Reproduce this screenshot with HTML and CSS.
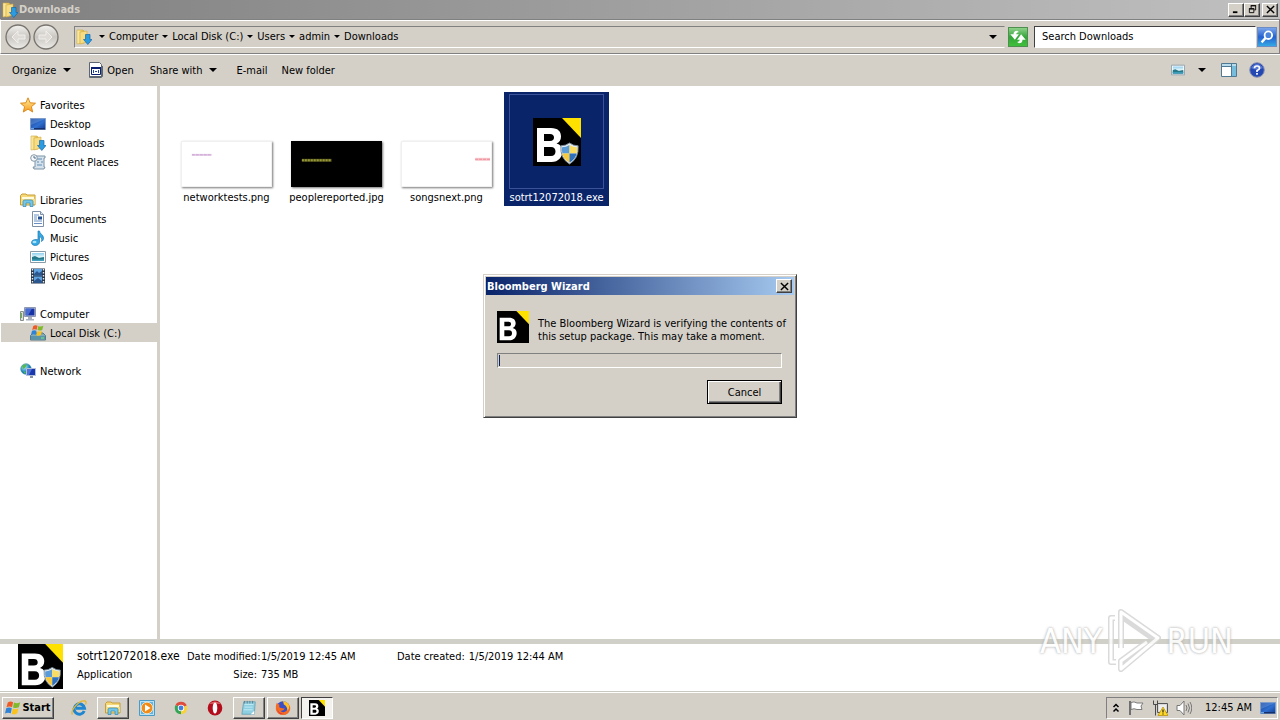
FILE: index.html
```html
<!DOCTYPE html>
<html lang="en">
<head>
<meta charset="utf-8">
<title>Downloads</title>
<link rel="stylesheet" href="styles.css">
</head>
<body>
<svg class="defs" aria-hidden="true">
  <defs>
    <linearGradient id="gFolder" x1="0" x2="1"><stop offset="0" stop-color="#fff3b0"/><stop offset="1" stop-color="#e3b83c"/></linearGradient>
    <linearGradient id="gScreen" x1="0" y1="0" x2="1" y2="1"><stop offset="0" stop-color="#1c3f94"/><stop offset=".55" stop-color="#2f6fd0"/><stop offset="1" stop-color="#123a8c"/></linearGradient>
    <linearGradient id="gStar" x1="0" y1="0" x2="0" y2="1"><stop offset="0" stop-color="#fff0a0"/><stop offset="1" stop-color="#f79a1c"/></linearGradient>
    <linearGradient id="gPic" x1="0" y1="0" x2="0" y2="1"><stop offset="0" stop-color="#8fd0f0"/><stop offset=".5" stop-color="#e6f7fb"/><stop offset="1" stop-color="#1d6f86"/></linearGradient>
    <linearGradient id="gBtn" x1="0" y1="0" x2="0" y2="1"><stop offset="0" stop-color="#f4f3f0"/><stop offset=".5" stop-color="#c9c6c1"/><stop offset="1" stop-color="#efedea"/></linearGradient>
    <radialGradient id="gGlobe" cx=".35" cy=".3"><stop offset="0" stop-color="#b9f0ff"/><stop offset="1" stop-color="#157bb8"/></radialGradient>
  </defs>
  <symbol id="downloads" viewBox="0 0 16 16">
    <path d="M1 1h6l1 1v12l-7 1z" fill="url(#gFolder)" stroke="#cfa640" stroke-width=".6"/>
    <path d="M4 3l7-1v11l-7 2z" fill="#f7dc82" stroke="#d2ab45" stroke-width=".6"/>
    <path d="M9.500 5.500h4.500v5h2l-4.200 5-4.300-5h2z" fill="#2d9be0" stroke="#1668ab" stroke-width=".7"/>
  </symbol>
  <symbol id="star" viewBox="0 0 16 16"><path d="M8 .8l2.100 5 5.400.4-4.100 3.500 1.300 5.300L8 12.100 3.300 15l1.300-5.300L.5 6.200l5.400-.4z" fill="url(#gStar)" stroke="#dd8a1c"/></symbol>
  <symbol id="desktop" viewBox="0 0 16 16">
    <path d="M.5 2.500h15v11H.5z" fill="url(#gScreen)" stroke="#7f9bc8"/><path d="M1 3h14L1 9z" fill="#7fb2ef" opacity=".35"/><path d="M1 12h14v1.500H1z" fill="#16306b"/><path d="M1 12h3v1.500H1z" fill="#6aa4e8"/>
  </symbol>
  <symbol id="recent" viewBox="0 0 16 16">
    <path d="M5 2h10v2h-1v9h1l-1 2H4l-1-2h2z" fill="#d5e2ec" stroke="#7d93a6"/><path d="M7 5h5M7 8h2m2 0h2M7 11h5" stroke="#5e8db3"/><circle cx="4" cy="4" r="3.300" fill="#f6f9fb" stroke="#8799a8"/><path d="M4 2v2h2" fill="none" stroke="#516f89"/>
  </symbol>
  <symbol id="library" viewBox="0 0 16 16">
    <path d="M.5 3.500L2 2h4l1 1h8v10H.5z" fill="#f5d978" stroke="#c89d35"/><path d="M2 5h12v3H2z" fill="#fffbe0"/><path d="M1 7h14v5H1z" fill="#f3dc83"/><path d="M3 14.500V9.500q0-1.500 2-1.500h6q2 0 2 1.500v5h-3V11H6v3.500z" fill="#74c6e9" stroke="#3387ad" stroke-width=".7"/>
  </symbol>
  <symbol id="document" viewBox="0 0 16 16"><path d="M2.500.5h8l3 3v12h-11z" fill="#fff" stroke="#7d8fa4"/><path d="M10.500.5v3h3" fill="#dce8f3" stroke="#7d8fa4"/><path d="M4 4h5M4 6h3M4 8h3M4 10h8M4 12.500h8" stroke="#6b8fc2"/><path d="M8 5.500h4v3H8z" fill="#234f8e"/></symbol>
  <symbol id="music" viewBox="0 0 16 16"><path d="M8 1h1.500c0 3 4 3.500 4 7 0 2-1 3-2 3.500.8-3-.5-4.500-2-5V12c0 2-2 3.500-4.200 3.500S1.500 14.300 1.500 12.500 3.500 9.500 6 9.500l2 .3z" fill="#35a8e0" stroke="#1a78b8" stroke-width=".7"/><ellipse cx="4.500" cy="12" rx="2" ry="1.200" fill="#a8e3fb"/></symbol>
  <symbol id="picture" viewBox="0 0 16 16"><path d="M.5 2.500h15v11H.5z" fill="#fff" stroke="#8a9ba8"/><path d="M2 4h12v8H2z" fill="url(#gPic)"/><path d="M2 8l3-1 4 2 5-1v4H2z" fill="#267988"/><path d="M2 10.500h12V12H2z" fill="#41a2c2"/></symbol>
  <symbol id="video" viewBox="0 0 16 16"><path d="M1 .5h14v15H1z" fill="#27384c"/><path d="M4 1h8v6.500H4zM4 8.500h8V15H4z" fill="#5fa4e0"/><path d="M4 6l3-3 2 2 3-2v4.500H4zM4 13l4-3 4 3v2H4z" fill="#2b568e"/><path d="M2.500 1v14M13.500 1v14" stroke="#e8eef4" stroke-width="1.400" stroke-dasharray="1.500 1.500"/></symbol>
  <symbol id="computer" viewBox="0 0 16 16"><path d="M.5 5.500h3v9h-3z" fill="#d7dedb" stroke="#849088"/><path d="M1.500 7v5" stroke="#67b24b"/><path d="M4.500 1.500h11v9h-11z" fill="#cfd5e2" stroke="#8f98b3"/><path d="M5.500 2.500h9v7h-9z" fill="#1732a4"/><path d="M5.500 2.500H12l-4 7H5.500z" fill="#5e83e4" opacity=".7"/><path d="M8 11h4v2h2v1.500H6V13h2z" fill="#a9b0bd"/></symbol>
  <symbol id="flag" viewBox="0 0 16 16"><path d="M2.800 2.500Q5.300.7 8.100 2.200L7 7.200Q4.300 5.800 1.500 7.300z" fill="#ee5a25"/><path d="M9 2.500q2.800 1.400 6.200-.2l-1.400 5q-2.900 1.500-5.800.2z" fill="#80ba2b"/><path d="M1.200 8.300Q4 6.900 6.800 8.200L5.800 13.300Q3 12 0 13.400z" fill="#2f83d6"/><path d="M7.800 8.600q2.900 1.300 5.700-.1l-1.400 5.100q-2.700 1.500-5.400.1z" fill="#fbc21d"/></symbol>
  <symbol id="disk" viewBox="0 0 16 16"><path d="M.5 10.500L3 8h10l2.500 2.500v4.500H.5z" fill="#7faaba" stroke="#557988"/><path d="M1 11h14v3.500H1z" fill="#5b94a8"/><path d="M11 13h3" stroke="#75ef78"/><svg x="1" y="-1" width="13" height="13" viewBox="0 0 16 16"><use href="#flag"/></svg></symbol>
  <symbol id="network" viewBox="0 0 16 16"><circle cx="6" cy="6" r="5.300" fill="url(#gGlobe)" stroke="#3a8b9a" stroke-width=".6"/><path d="M2 3q3-3 5-1L5 5 3 6zM3 8l3 1-1 2z" fill="#55b854"/><path d="M6.500 5.500h9v7h-9z" fill="#1a38ad" stroke="#b4bfd8"/><path d="M7 6h5l-3 6H7z" fill="#658ce8" opacity=".7"/><path d="M10 13h3v2h-3z" fill="#8694a8"/></symbol>
  <symbol id="app" viewBox="0 0 16 16"><path d="M1.500.500h10l2 2v13h-12z" fill="#fff" stroke="#5d6670"/><path d="M2 14.500h12.500V4" fill="none" stroke="#5d6670"/><path d="M3 5h10v8H3z" fill="#fff"/><path d="M3.500 5.500h9v7h-9z" fill="#fff" stroke="#0b1f6e"/><path d="M3 5h10v2H3z" fill="#0b1f6e"/><path d="M5 8h1v3H5zM7 9h2v1H7zM10 8h1v3h-1z" fill="#23479c"/></symbol>
  <symbol id="shield" viewBox="0 0 24 24"><path d="M12 1q4 3 9 3 1 13-9 19Q2 17 3 4q5 0 9-3z" fill="#e5edf3" stroke="#768796"/><path d="M12 3v9H4.500q-.6-3.500-.3-6.500Q8.500 5.300 12 3z" fill="#5b9bd8"/><path d="M12 3q3.500 2.300 7.800 2.500.3 3-.3 6.500H12z" fill="#fbdc63"/><path d="M4.500 12H12v9.500Q6 18 4.500 12z" fill="#f7c93b"/><path d="M19.500 12H12v9.500Q18 18 19.500 12z" fill="#2f70bd"/></symbol>
  <symbol id="bloom" viewBox="0 0 48 48"><path d="M0 0h48v48H0z" fill="#000"/><path d="M29 0h19v20z" fill="#ffe100"/><path fill-rule="evenodd" d="M4 10h14c7 0 10 3.500 10 8.500 0 3.500-1.700 6-4.500 7 4 1 6 4 6 7.500 0 6-4 11-11 11H4zM11 16v7h6c2.700 0 4-1.300 4-3.500S19.700 16 17 16zM11 29v9h7c3 0 4.500-2 4.500-4.500S21 29 18 29z" fill="#fff"/></symbol>
  <symbol id="bloomSafe" viewBox="0 0 48 48"><use href="#bloom"/><svg x="25" y="24" width="23" height="23" viewBox="0 0 24 24"><use href="#shield"/></svg></symbol>
  <symbol id="ie" viewBox="0 0 16 16"><path d="M13.200 11A5.200 5.200 0 1 1 13.500 8.300H5" fill="none" stroke="#1f86cf" stroke-width="3"/><path d="M1.500 14.500C-1 11 8-.5 14 1c1.500.4 1.200 2 .5 3.500" fill="none" stroke="#e3b62f" stroke-width="1.300"/></symbol>
  <symbol id="player" viewBox="0 0 16 16"><path d="M.5.500h15v15H.5z" fill="#b8e0f5" stroke="#4b9ac6"/><path d="M2 2h12v12H2z" fill="#64b4df"/><circle cx="8" cy="8" r="5.800" fill="#f28a17" stroke="#fff0cf" stroke-width=".8"/><path d="M6 4.500L11.500 8 6 11.500z" fill="#fff"/></symbol>
  <symbol id="chrome" viewBox="0 0 16 16"><path d="M8 8L2.500 5A6.300 6.300 0 0 1 13.800 5.500z" fill="#df4b3c"/><path d="M8 8l5.800-2.500A6.300 6.300 0 0 1 8 14.300z" fill="#f9d13d"/><path d="M8 8v6.300A6.300 6.300 0 0 1 2.500 5z" fill="#35a657"/><circle cx="8" cy="8" r="3.200" fill="#fff"/><circle cx="8" cy="8" r="2.400" fill="#427edb"/></symbol>
  <symbol id="opera" viewBox="0 0 16 16"><ellipse cx="8" cy="8" rx="7.300" ry="7.500" fill="#b30d1c"/><path d="M2 4q6-5 12 0-6-1-12 0z" fill="#e06a6a"/><ellipse cx="8" cy="8" rx="2.300" ry="5.500" fill="#fff"/></symbol>
  <symbol id="notepad" viewBox="0 0 18 18"><path d="M3 2h13l-1 14H1z" fill="#8fcfe2" stroke="#6ba4b6"/><path d="M4 5h10M4 8h9M3 11h10" stroke="#c6edf5"/><path d="M4 1v3M7 1v3M10 1v3M13 1v3" stroke="#637d86"/><path d="M11 16l4-4v4z" fill="#fff"/></symbol>
  <symbol id="firefox" viewBox="0 0 18 18"><circle cx="9" cy="9" r="7.500" fill="#3b4ec5"/><path d="M2 3q1 2 3 2Q4 9 7 9q3 1 4 0-1 4-5 3 4 4 8-1 2-4-1-8 5 3 4 8-2 6-8 6T1 11Q.5 6 2 3z" fill="#f46b21"/><path d="M9 1q6 1 7 6 0 3-2 5 0-5-4-7z" fill="#ffc329"/><path d="M2 9q2 7 8 6-6 3-8-6z" fill="#e52f3a"/></symbol>
</svg>

<div class="screen">
<main class="window">
  <header class="title">
    <svg class="ico"><use href="#downloads"/></svg>
    <h1>Downloads</h1>
    <div class="winbtns">
      <button class="cap" aria-label="Minimize"><svg viewBox="0 0 10 10"><path d="M1 8h5" stroke="#000" stroke-width="2"/></svg></button>
      <button class="cap" aria-label="Restore"><svg viewBox="0 0 10 10"><path d="M3.500 4V.5h5v5H7M3 1h6M1.500 4.500h5v4h-5zM1 4h6" fill="none" stroke="#000"/></svg></button>
      <button class="cap close" aria-label="Close"><svg viewBox="0 0 10 10"><path d="M1 1l8 8M9 1L1 9" stroke="#000" stroke-width="1.600"/></svg></button>
    </div>
  </header>

  <nav class="nav" aria-label="Address">
    <div class="backfwd">
      <button class="round" aria-label="Back"><svg viewBox="0 0 26 26"><circle cx="13" cy="13" r="12" fill="url(#gBtn)" stroke="#77736e" stroke-width="1.300"/><path d="M13 7l-6 6 6 6v-4h7v-4h-7z" fill="#dedbd7" stroke="#f0eeeb"/></svg></button>
      <button class="round" aria-label="Forward"><svg viewBox="0 0 26 26"><circle cx="13" cy="13" r="12" fill="url(#gBtn)" stroke="#77736e" stroke-width="1.300"/><path d="M13 7l6 6-6 6v-4H6v-4h7z" fill="#dedbd7" stroke="#f0eeeb"/></svg></button>
    </div>
    <div class="address">
      <svg class="ico"><use href="#downloads"/></svg>
      <i class="arrow"></i><a href="#">Computer</a>
      <i class="arrow"></i><a href="#">Local Disk (C:)</a>
      <i class="arrow"></i><a href="#">Users</a>
      <i class="arrow"></i><a href="#">admin</a>
      <i class="arrow"></i><a href="#">Downloads</a>
      <button class="drop" aria-label="Previous locations"><i class="arrow big"></i></button>
    </div>
    <button class="refresh" aria-label="Refresh"><svg viewBox="0 0 20 20"><path d="M9 3Q5 3 5 7H1.500L6.500 13l4.500-6H8q0-2 3-2.500zM11 17q4 0 4-4h3.500L13.500 7 9 13h3q0 2-3 2.500z" fill="#fff"/></svg></button>
    <input class="search" type="text" value="Search Downloads" aria-label="Search Downloads">
    <button class="go" aria-label="Search"><svg viewBox="0 0 20 20"><circle cx="11.500" cy="8" r="4.200" fill="#4b84dd" stroke="#fff" stroke-width="2"/><path d="M8.500 11L4 16" stroke="#fff" stroke-width="2.600"/></svg></button>
  </nav>

  <div class="toolbar">
    <button class="organize">Organize<i class="arrow big"></i></button>
    <button class="open"><svg class="ico"><use href="#app"/></svg>Open</button>
    <button class="share">Share with<i class="arrow big"></i></button>
    <button class="email">E-mail</button>
    <button>New folder</button>
    <div class="views">
      <button aria-label="Change your view"><svg class="small"><use href="#picture"/></svg></button>
      <button class="more" aria-label="More view options"><i class="arrow big"></i></button>
      <button class="pane" aria-label="Show the preview pane"><svg class="ico" viewBox="0 0 16 16"><path d="M.5 1.500h15v13H.5z" fill="#fff" stroke="#4f7893"/><path d="M1 2h14v2H1z" fill="#b8dceb"/><path d="M10.500 2v12" stroke="#4f7893"/><path d="M11 4h4v10h-4z" fill="#76bddd"/><path d="M1 4.500h9" stroke="#4f7893"/></svg></button>
      <button aria-label="Help"><svg class="ico" viewBox="0 0 16 16"><circle cx="8" cy="8" r="7.300" fill="#2448b2" stroke="#8992b3"/><path d="M2 6q6-8 12 0-6 3-12 0z" fill="#6e8de2" opacity=".7"/><path d="M5.500 6.200Q5.500 4 8 4t2.500 2.200Q10.500 7.500 8 8.500V10m0 1v1.800" fill="none" stroke="#fff" stroke-width="1.700"/></svg></button>
    </div>
  </div>

  <div class="body">
    <aside class="side">
      <ul>
        <li><svg class="ico"><use href="#star"/></svg>Favorites</li>
        <li class="sub"><svg class="ico"><use href="#desktop"/></svg>Desktop</li>
        <li class="sub"><svg class="ico"><use href="#downloads"/></svg>Downloads</li>
        <li class="sub"><svg class="ico"><use href="#recent"/></svg>Recent Places</li>
      </ul>
      <ul>
        <li><svg class="ico"><use href="#library"/></svg>Libraries</li>
        <li class="sub"><svg class="ico"><use href="#document"/></svg>Documents</li>
        <li class="sub"><svg class="ico"><use href="#music"/></svg>Music</li>
        <li class="sub"><svg class="ico"><use href="#picture"/></svg>Pictures</li>
        <li class="sub"><svg class="ico"><use href="#video"/></svg>Videos</li>
      </ul>
      <ul>
        <li><svg class="ico"><use href="#computer"/></svg>Computer</li>
        <li class="sub current"><svg class="ico"><use href="#disk"/></svg>Local Disk (C:)</li>
      </ul>
      <ul>
        <li><svg class="ico"><use href="#network"/></svg>Network</li>
      </ul>
    </aside>
    <section class="files">
      <figure class="file"><div class="frame"><div class="thumb"><svg viewBox="0 0 90 45"><path d="M10 13h20" stroke="#e4cde8" stroke-width="2"/><path d="M10 13h20" stroke="#c9a3d0" stroke-dasharray="3 1"/></svg></div></div><figcaption>networktests.png</figcaption></figure>
      <figure class="file"><div class="frame"><div class="thumb dark"><svg viewBox="0 0 90 45"><path d="M10 18.500h30" stroke="#55551c" stroke-width="3"/><path d="M10 18.500h30" stroke="#98983a" stroke-width="2" stroke-dasharray="2 1"/></svg></div></div><figcaption>peoplereported.jpg</figcaption></figure>
      <figure class="file"><div class="frame"><div class="thumb"><svg viewBox="0 0 90 45"><path d="M74 17.500h15" stroke="#f7c4ca" stroke-width="3"/><path d="M74 17.500h15" stroke="#ee8c98" stroke-dasharray="3 1"/></svg></div></div><figcaption>songsnext.png</figcaption></figure>
      <figure class="file selected"><div class="frame"><svg class="exe"><use href="#bloomSafe"/></svg></div><figcaption>sotrt12072018.exe</figcaption></figure>
    </section>
  </div>

  <footer class="details">
    <svg class="preview"><use href="#bloomSafe"/></svg>
    <div class="name"><strong>sotrt12072018.exe</strong><span>Application</span></div>
    <dl class="modified"><dt>Date modified:</dt><dd>1/5/2019 12:45 AM</dd><dt>Size:</dt><dd>735 MB</dd></dl>
    <dl><dt>Date created:</dt><dd>1/5/2019 12:44 AM</dd></dl>
  </footer>
</main>

<div class="watermark" aria-label="ANY RUN">
  <span>ANY</span>
  <svg viewBox="0 0 56 66"><g fill="none" stroke-linejoin="round"><g stroke="#d4d4d4" stroke-width="6"><path d="M9 10H5v44h5M15 40V4l37 26-37 31v-8l26-19"/><path d="M15 8l33 23"/></g><g stroke="#fff" stroke-width="3"><path d="M9 10H5v44h5M15 40V4l37 26-37 31v-8l26-19"/></g></g></svg>
  <span>RUN</span>
</div>

<div class="overlay">
  <section class="dialog" role="dialog" aria-labelledby="wizard">
    <header><h2 id="wizard">Bloomberg Wizard</h2><button class="cap" aria-label="Close"><svg viewBox="0 0 10 10"><path d="M1 1l8 8M9 1L1 9" stroke="#000" stroke-width="1.600"/></svg></button></header>
    <div class="content">
      <div class="message"><svg class="logo"><use href="#bloom"/></svg><p>The Bloomberg Wizard is verifying the contents of<br>this setup package. This may take a moment.</p></div>
      <div class="progress" role="progressbar" aria-label="Verification" aria-valuenow="0"></div>
      <button class="cancel">Cancel</button>
    </div>
  </section>
</div>

<footer class="taskbar">
  <button class="start"><svg class="flag"><use href="#flag"/></svg>Start</button>
  <div class="tasks">
    <button aria-label="Internet Explorer"><svg><use href="#ie"/></svg></button>
    <button class="up" aria-label="Explorer"><svg><use href="#library"/></svg></button>
    <button aria-label="Media Player"><svg><use href="#player"/></svg></button>
    <button aria-label="Chrome"><svg><use href="#chrome"/></svg></button>
    <button aria-label="Opera"><svg><use href="#opera"/></svg></button>
    <button class="up" aria-label="Notepad"><svg><use href="#notepad"/></svg></button>
    <button class="up" aria-label="Firefox"><svg><use href="#firefox"/></svg></button>
    <button class="down" aria-label="Bloomberg Wizard"><svg><use href="#bloom"/></svg></button>
  </div>
  <div class="tray">
    <svg class="chev" viewBox="0 0 8 12"><path d="M1.500 5L4 2.500 6.500 5M1.500 9.500L4 7l2.500 2.500" fill="none" stroke="#000" stroke-width="1.500"/></svg>
    <svg viewBox="0 0 16 16"><path d="M2 1v14" stroke="#6f6f6f" stroke-width="2"/><path d="M3 2.500q3-1.500 6 .5h6l-2 3 1 3.500H9Q6 8 3 9.500z" fill="#fff" stroke="#7b7b7b"/></svg>
    <svg viewBox="0 0 16 16"><path d="M5.500 3.500h10v9h-10z" fill="#d8d8d8" stroke="#555"/><path d="M7 5h7v6H7z" fill="#eee"/><path d="M1.500.5v4h4v-4M3.500 4.500v11" fill="none" stroke="#4a4a4a"/><path d="M11 7l5 8.500H6z" fill="#ffd925" stroke="#b38a00" stroke-width=".7"/><path d="M11 9.500v3m0 1v1" stroke="#222" stroke-width="1.200"/></svg>
    <svg viewBox="0 0 16 16"><path d="M1 5.500h3L8 1v14l-4-4.500H1z" fill="#fff" stroke="#777"/><path d="M10 5q2 3 0 6M12 3.500q3 4.500 0 9M14 2q3.500 6 0 12" fill="none" stroke="#777"/></svg>
    <time>12:45 AM</time>
    <svg viewBox="0 0 16 16"><use href="#desktop"/></svg>
  </div>
</footer>
</div>
</body>
</html>
```
FILE: styles.css
```css
* { box-sizing: border-box; }
:root {
  --face: #d4d0c8;
  --shade: #808080;
}
body {
  margin: 0;
  font: 11px/13px Tahoma, "DejaVu Sans Condensed", "DejaVu Sans", sans-serif;
  color: #000;
  background: var(--face);
}
button, input { font: inherit; color: inherit; margin: 0; }
button { padding: 0; border: 0; background: none; display: flex; align-items: center; justify-content: center; }
a { color: inherit; text-decoration: none; }
h1, h2, p, ul, dl, dd, figure { margin: 0; padding: 0; }
svg { display: block; flex: none; }
.defs { position: absolute; width: 0; height: 0; }
.ico { width: 16px; height: 16px; }
.screen { position: relative; height: 100vh; display: flex; flex-direction: column; overflow: hidden; }
.window { flex: 1; min-height: 0; display: flex; flex-direction: column; }
.arrow { flex: none; border: 3px solid transparent; border-top-color: #000; border-bottom: 0; }
.arrow.big { border-width: 4px 4px 0; }

.title { height: 19px; display: flex; align-items: center; gap: 1px; padding: 0 2px; background: linear-gradient(90deg, #808080, #c0c0c0); color: var(--face); }
.title h1 { font-size: 11px; font-weight: bold; }
.winbtns { margin-left: auto; display: flex; }
.cap { width: 16px; height: 14px; background: var(--face); border: 1px solid; border-color: #fff #404040 #404040 #fff; box-shadow: inset -1px -1px var(--shade); }
.cap svg { width: 9px; height: 9px; }
.cap.close { margin-left: 2px; }

.nav { height: 35px; display: flex; align-items: center; padding: 0 2px 0 4px; border: 1px solid; border-color: var(--shade) var(--shade) var(--shade) #fff; box-shadow: inset 0 1px #fff, 0 1px #fff; }
.backfwd { display: flex; gap: 2px; margin-right: 15px; }
.round svg { width: 26px; height: 26px; }
.address { flex: 1; height: 22px; display: flex; align-items: center; gap: 4px; padding-left: 1px; border: 1px solid; border-color: var(--shade) var(--face) #fff var(--shade); }
.address .ico { margin-right: 3px; }
.address .drop { margin-left: auto; width: 22px; height: 20px; }
.refresh { width: 20px; height: 20px; margin: 0 6px 0 3px; background: linear-gradient(#8fd18a, #35a53b 50%, #3fbf3a); border: 1px solid #4e8f50; }
.refresh svg { width: 18px; height: 18px; }
.search { width: 222px; height: 22px; padding: 0 7px; background: #fff; border: 1px solid; border-color: #404040 #fff #fff #404040; border-radius: 0; outline: 0; }
.go { width: 20px; height: 20px; margin-left: 1px; background: linear-gradient(#7ba5ea, #2560d0 50%, #35a8e4); border: 1px solid #6c8cc4; }
.go svg { width: 18px; height: 18px; }

.toolbar { height: 32px; display: flex; align-items: center; padding: 0 15px 0 12px; }
.toolbar button { height: 22px; }
.organize { gap: 7px; margin-right: 17px; }
.open { gap: 3px; margin-right: 16px; }
.share { gap: 7px; margin-right: 19px; }
.email { margin-right: 14px; }
.views { margin-left: auto; display: flex; align-items: center; }
.small { width: 14px; height: 14px; }
.more { margin: 0 15px 0 13px; }
.pane { margin-right: 12px; }

.body { flex: 1; min-height: 0; display: flex; background: #fff; }
.side { width: 160px; padding-top: 9px; display: flex; flex-direction: column; gap: 19px; border-right: 3px solid var(--face); }
.side ul { list-style: none; }
.side li { height: 19px; display: flex; align-items: center; gap: 4px; padding: 1px 0 0 20px; }
.side .sub { padding-left: 30px; }
.side .current { background: var(--face); margin: 0 -2px 0 1px; padding-left: 29px; }
.files { flex: 1; display: flex; align-items: flex-start; flex-wrap: wrap; gap: 5px; padding: 6px 0 0 14px; }
.file { width: 105px; height: 114px; padding-top: 2px; text-align: center; white-space: nowrap; display: flex; flex-direction: column; align-items: center; gap: 2px; }
.frame { width: 95px; height: 95px; display: flex; flex-direction: column; align-items: center; justify-content: flex-end; padding-bottom: 2px; }
.thumb { width: 91px; height: 46px; background: #fff; border: 1px solid #f0f0f0; box-shadow: 1px 1px 2px #777; }
.thumb.dark { background: #000; border-color: #000; }
.selected { background: #0a246a; color: #fff; }
.selected .frame { border: 1px solid #3b529a; justify-content: center; padding: 0; }
.exe { width: 48px; height: 48px; }

.details { height: 53px; display: flex; align-items: flex-start; background: #fff; border-top: 5px solid #d0d0c8; border-bottom: 1px solid #c8c8c0; white-space: nowrap; }
.preview { width: 45px; height: 45px; margin: 0 14px 0 18px; }
.name { width: 110px; display: flex; flex-direction: column; gap: 5px; padding-top: 6px; }
.name strong { font-weight: normal; font-size: 12px; }
.details dl { display: grid; grid-template-columns: auto auto; gap: 5px 4px; padding-top: 6px; }
.details dt { text-align: right; }
.details .modified { grid-template-columns: 70px auto; width: 168px; margin-right: 42px; }

.watermark { position: absolute; right: 47px; bottom: 46px; display: flex; align-items: center; gap: 4px; font: 34px/60px "DejaVu Sans Condensed", "DejaVu Sans", sans-serif; color: #fff; text-shadow: 0 0 3px #aaa, 0 0 2px #ccc; opacity: .85; }
.watermark svg { width: 56px; height: 66px; }

.overlay { position: absolute; inset: 0 0 28px; display: grid; place-items: center; }
.dialog { width: 314px; background: var(--face); border: 1px solid; border-color: var(--face) #404040 #404040 var(--face); box-shadow: inset 1px 1px #fff, inset -1px -1px var(--shade); padding: 2px; }
.dialog header { height: 18px; display: flex; align-items: center; justify-content: space-between; padding: 0 2px 0 1px; background: linear-gradient(90deg, #0a246a, #a6caf0); color: #fff; }
.dialog h2 { font-size: 11px; line-height: 13px; }
.content { padding: 16px 12px 11px 11px; display: flex; flex-direction: column; }
.message { display: flex; gap: 9px; white-space: nowrap; }
.logo { width: 32px; height: 32px; }
.message p { padding-top: 6px; }
.progress { height: 15px; margin: 10px 0 12px; border: 1px solid; border-color: var(--shade) #fff #fff var(--shade); padding: 1px; }
.progress::before { content: ""; display: block; width: 1px; height: 11px; background: #0a246a; }
.cancel { align-self: flex-end; width: 75px; height: 24px; border: 1px solid #000; box-shadow: inset 1px 1px #fff, inset -1px -1px #404040, inset -2px -2px var(--shade); }

.taskbar { height: 28px; display: flex; align-items: center; padding: 2px 2px 0; background: var(--face); border-top: 1px solid #fff; }
.start { width: 52px; height: 22px; gap: 1px; font-weight: bold; border: 1px solid; border-color: #fff #404040 #404040 #fff; box-shadow: inset -1px -1px var(--shade); }
.flag { width: 16px; height: 16px; }
.tasks { display: flex; gap: 2px; margin-left: 9px; }
.tasks button { width: 32px; height: 22px; }
.tasks svg { width: 16px; height: 16px; }
.tasks .up { border: 1px solid; border-color: #fff #404040 #404040 #fff; box-shadow: inset -1px -1px var(--shade); }
.tasks .down { background: #f4f2ee; border: 1px solid; border-color: #404040 #fff #fff #404040; }
.tray { margin-left: auto; height: 22px; display: flex; align-items: center; gap: 8px; padding: 0 1px 0 5px; border: 1px solid; border-color: var(--shade) #fff #fff var(--shade); }
.tray svg { width: 16px; height: 16px; }
.tray .chev { width: 8px; height: 12px; }
.tray time { padding-left: 5px; white-space: nowrap; }
```
